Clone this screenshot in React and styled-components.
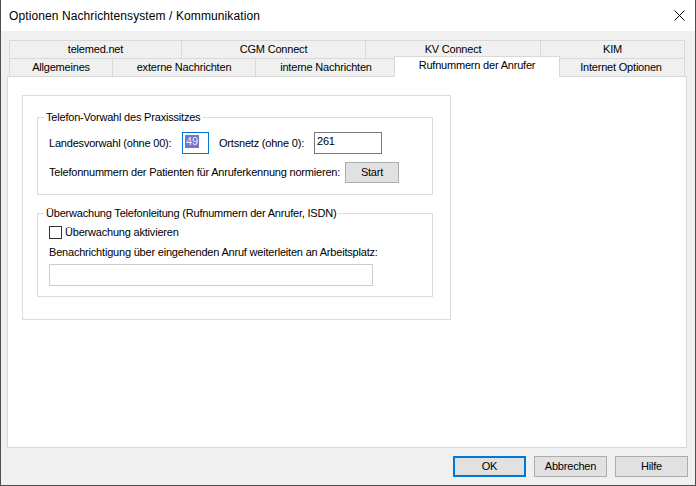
import React from 'react';
import styled, { createGlobalStyle, css } from 'styled-components';

const Global = createGlobalStyle`
  html, body { margin: 0; padding: 0; background: #ffffff; }
  body { width: 696px; height: 486px; overflow: hidden; }
  *, *::before, *::after { box-sizing: border-box; }
`;

const Window = styled.div`
  width: 696px;
  height: 486px;
  display: flex;
  flex-direction: column;
  border: 1px solid #4f4f4f;
  border-top: none;
  background: #f0f0f0;
  font-family: "Liberation Sans", Arial, sans-serif;
  font-size: 11px;
  line-height: 13px;
  letter-spacing: -0.2px;
  color: #000;
`;

const TitleBar = styled.div`
  height: 31px;
  flex: none;
  background: #ffffff;
  display: flex;
  align-items: center;
  justify-content: space-between;
  padding: 0 10px 0 8px;
`;

const Title = styled.span`
  font-size: 12px;
  line-height: 16px;
  letter-spacing: 0.1px;
  color: #000;
`;

const Body = styled.div`
  flex: 1;
  display: flex;
  flex-direction: column;
  padding: 9px 8px 0 6px;
  min-height: 0;
`;

const TabStrip = styled.div`
  display: flex;
  flex-direction: column;
  margin: 0 2px;
  flex: none;
`;

const TabRow = styled.div`
  display: flex;
  height: 18px;
  align-items: flex-start;
`;

const Tab = styled.div`
  flex: none;
  width: ${p => p.$w}px;
  height: 18px;
  border: 1px solid #d9d9d9;
  border-bottom: none;
  border-right-width: ${p => (p.$last ? 1 : 0)}px;
  background: #f0f0f0;
  display: flex;
  align-items: center;
  justify-content: center;
  white-space: nowrap;
  padding-bottom: 1px;
  ${p =>
    p.$active &&
    css`
      width: ${p.$w + 5}px;
      height: 21px;
      margin: -2px -3px 0 -2px;
      border-right-width: 1px;
      background: #ffffff;
      position: relative;
      z-index: 1;
      padding-bottom: 3px;
    `}
`;

const Panel = styled.div`
  flex: 1;
  background: #ffffff;
  border: 1px solid #d9d9d9;
  padding: 18px 0 0 14px;
`;

const InnerBox = styled.div`
  width: 429px;
  height: 225px;
  border: 1px solid #dcdcdc;
  padding: 15px 0 0 14px;
  display: flex;
  flex-direction: column;
`;

const Group = styled.fieldset`
  width: 396px;
  height: ${p => p.$h}px;
  margin: ${p => p.$mt || 0}px 0 0 0;
  border: 1px solid #dcdcdc;
  padding: 0 0 0 11px;
  min-width: 0;
  display: flex;
  flex-direction: column;
`;

const Legend = styled.legend`
  padding: 0 2px;
  margin-left: -5px;
  line-height: 13px;
  font-size: 11px;
`;

const Row = styled.div`
  display: flex;
  align-items: center;
  height: ${p => p.$h}px;
  margin-top: ${p => p.$mt}px;
`;

const Label = styled.span`
  flex: none;
  width: ${p => (p.$w ? `${p.$w}px` : 'auto')};
  margin-left: ${p => p.$ml || 0}px;
  white-space: nowrap;
`;

const TextBox = styled.div`
  flex: none;
  width: ${p => p.$w}px;
  height: 22px;
  margin-top: ${p => p.$mt || 0}px;
  border: 1px solid ${p => p.$border};
  background: #ffffff;
  padding: 2px 2px 0 2px;
  line-height: 13px;
  white-space: nowrap;
`;

const Selected = styled.span`
  background: #7474d2;
  color: #eeeefa;
  display: inline-block;
  padding: 0 1px;
`;

const Button = styled.div`
  flex: none;
  width: ${p => p.$w}px;
  height: 21px;
  background: #e1e1e1;
  border: ${p => (p.$default ? '2px solid #0078d7' : '1px solid #adadad')};
  display: flex;
  align-items: center;
  justify-content: center;
  white-space: nowrap;
`;

const CheckRow = styled.label`
  display: flex;
  align-items: center;
  gap: 3px;
  height: 15px;
  margin-top: 5px;
`;

const CheckBox = styled.span`
  width: 13px;
  height: 13px;
  border: 1px solid #333333;
  background: #ffffff;
  flex: none;
`;

const Text = styled.div`
  margin-top: ${p => p.$mt}px;
  line-height: 13px;
  white-space: nowrap;
`;

const Footer = styled.div`
  flex: none;
  display: flex;
  justify-content: flex-end;
  gap: 8px;
  padding: 8px 0 8px;
  margin-right: -1px;
`;

const row1 = [
  { t: 'telemed.net', w: 172 },
  { t: 'CGM Connect', w: 184 },
  { t: 'KV Connect', w: 175 },
  { t: 'KIM', w: 145 },
];
const row2 = [
  { t: 'Allgemeines', w: 103 },
  { t: 'externe Nachrichten', w: 143 },
  { t: 'interne Nachrichten', w: 141 },
  { t: 'Rufnummern der Anrufer', w: 161, active: true },
  { t: 'Internet Optionen', w: 128 },
];

const CloseIcon = () => (
  <svg width="11" height="11" viewBox="0 0 11 11">
    <path d="M0.5 0.5 L10.5 10.5 M10.5 0.5 L0.5 10.5" stroke="#000" strokeWidth="1" fill="none" />
  </svg>
);

export default function App() {
  return (
    <>
      <Global />
      <Window>
        <TitleBar>
          <Title>Optionen Nachrichtensystem / Kommunikation</Title>
          <CloseIcon />
        </TitleBar>
        <Body>
          <TabStrip>
            <TabRow>
              {row1.map((r, i) => (
                <Tab key={r.t} $w={r.w} $last={i === row1.length - 1}>
                  {r.t}
                </Tab>
              ))}
            </TabRow>
            <TabRow>
              {row2.map((r, i) => (
                <Tab key={r.t} $w={r.w} $last={i === row2.length - 1} $active={r.active}>
                  {r.t}
                </Tab>
              ))}
            </TabRow>
          </TabStrip>
          <Panel>
            <InnerBox>
              <Group $h={84}>
                <Legend>Telefon-Vorwahl des Praxissitzes</Legend>
                <Row $h={22} $mt={8}>
                  <Label $w={133}>Landesvorwahl (ohne 00):</Label>
                  <TextBox $w={27} $border="#0078d7">
                    <Selected>49</Selected>
                  </TextBox>
                  <Label $w={95} $ml={10}>Ortsnetz (ohne 0):</Label>
                  <TextBox $w={68} $border="#7a7a7a">261</TextBox>
                </Row>
                <Row $h={21} $mt={8}>
                  <Label $w={296}>Telefonnummern der Patienten für Anruferkennung normieren:</Label>
                  <Button $w={54}>Start</Button>
                </Row>
              </Group>
              <Group $h={90} $mt={12}>
                <Legend>Überwachung Telefonleitung (Rufnummern der Anrufer, ISDN)</Legend>
                <CheckRow>
                  <CheckBox />
                  <span>Überwachung aktivieren</span>
                </CheckRow>
                <Text $mt={6}>Benachrichtigung über eingehenden Anruf weiterleiten an Arbeitsplatz:</Text>
                <TextBox $w={324} $mt={5} $border="#cccccc" />
              </Group>
            </InnerBox>
          </Panel>
          <Footer>
            <Button $w={73} $default>OK</Button>
            <Button $w={73}>Abbrechen</Button>
            <Button $w={73}>Hilfe</Button>
          </Footer>
        </Body>
      </Window>
    </>
  );
}
